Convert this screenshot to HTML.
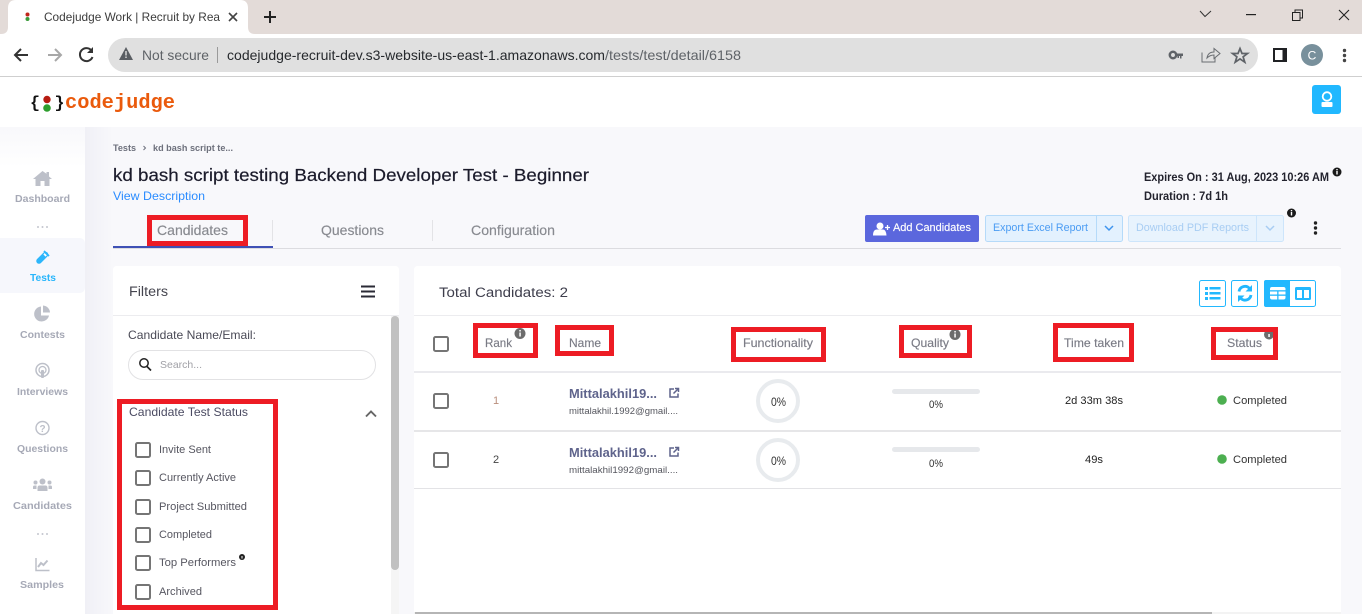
<!DOCTYPE html>
<html lang="en"><head><meta charset="utf-8"><title>Codejudge Work | Recruit by Real Skills</title>
<style>
html,body{margin:0;padding:0;width:1362px;height:614px;overflow:hidden;background:#fff}
svg{display:block}
text{font-family:"Liberation Sans",sans-serif;white-space:pre}
.b{font-weight:700}
</style></head><body>
<svg xmlns="http://www.w3.org/2000/svg" width="1362" height="614" viewBox="0 0 1362 614">
<defs>
<linearGradient id="sh" x1="0" x2="1" y1="0" y2="0"><stop offset="0" stop-color="#f0f0f6"/><stop offset="1" stop-color="#f8f8fb"/></linearGradient>
<linearGradient id="fade" x1="0" x2="0" y1="0" y2="1"><stop offset="0" stop-color="#f8f8fb"/><stop offset="1" stop-color="#fff"/></linearGradient>
</defs>
<!-- browser chrome -->
<rect width="1362" height="34" fill="#e3dbd8"/>
<path d="M0 34h1q7 0 7-7V8q0-8 8-8h224q8 0 8 8v19q0 7 7 7z" fill="#fff"/>
<rect y="34" width="1362" height="42" fill="#fff"/>
<rect y="76" width="1362" height="1" fill="#cfcfcf"/>
<circle cx="27.500" cy="14.500" r="2" fill="#c1261c"/><circle cx="27.500" cy="19" r="2" fill="#3a9a3a"/>
<text x="44" y="21" font-size="12" fill="#3c3c3c" textLength="176" lengthAdjust="spacingAndGlyphs">Codejudge Work | Recruit by Rea</text>
<path d="M229 13l8 8M237 13l-8 8" stroke="#444" stroke-width="1.600" fill="none"/>
<path d="M264 17h12M270 11v12" stroke="#222" stroke-width="2" fill="none"/>
<path d="M1200 11l5 5.500 6-5.500" stroke="#333" stroke-width="1" fill="none"/>
<rect x="1246" y="14" width="10" height="1.200" fill="#222"/>
<path d="M1292.500 12.500h7.500v8h-7.500zM1295 12.500v-2.500h7.500v8H1300" stroke="#222" stroke-width="1" fill="none"/>
<path d="M1339 10l10 10M1349 10l-10 10" stroke="#222" stroke-width="1.100" fill="none"/>
<path d="M28 55H16M21 49l-6 6 6 6" stroke="#333" stroke-width="2" fill="none"/>
<path d="M61 55H48M55 49l6 6-6 6" stroke="#a8a8a8" stroke-width="2" fill="none"/>
<path d="M91.500 50.500A6.500 6.500 0 1 0 92.500 57" stroke="#333" stroke-width="2" fill="none"/><path d="M93 47v6h-6z" fill="#333"/>
<rect x="108" y="38" width="1150" height="34" rx="17" fill="#e0e0e0"/>
<path d="M126 47l7 13h-14z" fill="#5a5e63"/><rect x="125.300" y="51" width="1.400" height="4.500" fill="#e0e0e0"/><rect x="125.300" y="56.500" width="1.400" height="1.500" fill="#e0e0e0"/>
<text x="142" y="60" font-size="14" fill="#5f6368" textLength="67" lengthAdjust="spacingAndGlyphs">Not secure</text>
<rect x="217" y="47" width="1" height="16" fill="#9a9a9a"/>
<text x="227" y="60" font-size="14" fill="#26292d" textLength="378" lengthAdjust="spacingAndGlyphs">codejudge-recruit-dev.s3-website-us-east-1.amazonaws.com</text>
<text x="605" y="60" font-size="14" fill="#5f6368" textLength="136" lengthAdjust="spacingAndGlyphs">/tests/test/detail/6158</text>
<circle cx="1173" cy="55" r="3.200" fill="none" stroke="#5f6368" stroke-width="2.500"/><path d="M1176 53.500h7v2.500h-1.500v2.500h-1.500V56h-1v2h-1.500V56H1176z" fill="#5f6368"/>
<path d="M1202 52.500v9.500h13v-4M1207 58q1-6 7-6v-3.500l6 5-6 5V55q-4 0-7 3z" stroke="#6a6e72" stroke-width="1" fill="none"/>
<path d="M1240 48.500l2 5h5.500l-4.400 3.300 1.700 5.400-4.800-3.300-4.800 3.300 1.700-5.400-4.400-3.300h5.500z" stroke="#5f6368" stroke-width="1.700" fill="none"/>
<rect x="1273" y="48" width="14" height="14" fill="#202124"/><rect x="1275" y="50" width="7.500" height="10" fill="#fff"/>
<circle cx="1312" cy="55" r="11" fill="#78909c"/><text x="1312" y="59.500" font-size="12" fill="#fff" text-anchor="middle">C</text>
<circle cx="1344.500" cy="50.500" r="1.700" fill="#444"/><circle cx="1344.500" cy="55.500" r="1.700" fill="#444"/><circle cx="1344.500" cy="60.500" r="1.700" fill="#444"/>

<!-- app header -->
<rect y="77" width="1362" height="50" fill="#fff"/>
<text x="30" y="107.500" font-size="17" class="b" fill="#111" style="font-family:'Liberation Mono',monospace" textLength="10" lengthAdjust="spacingAndGlyphs">{</text>
<text x="54.500" y="107.500" font-size="17" class="b" fill="#111" style="font-family:'Liberation Mono',monospace" textLength="10" lengthAdjust="spacingAndGlyphs">}</text>
<circle cx="47" cy="99.500" r="3.700" fill="#b71c12"/><circle cx="47" cy="108" r="3.800" fill="#2e9e2e"/>
<text x="65" y="108" font-size="20" class="b" fill="#ea5a0c" style="font-family:'Liberation Mono',monospace" textLength="110" lengthAdjust="spacingAndGlyphs">codejudge</text>
<rect x="1312" y="85" width="29" height="29" rx="3" fill="#21b8ff"/>
<circle cx="1327" cy="96.500" r="4.300" fill="none" stroke="#fff" stroke-width="1.800"/><rect x="1321.500" y="102" width="11" height="5" rx="1" fill="#fff"/>

<!-- page background -->
<rect y="127" width="1362" height="487" fill="#f8f8fb"/>
<rect x="85" y="127" width="28" height="487" fill="url(#sh)"/>
<rect y="127" width="85" height="487" fill="#fff"/>
<rect y="127" width="85" height="40" fill="url(#fade)"/>
<path d="M0 238h79q6 0 6 6v43q0 6-6 6H0z" fill="#f6f7fc"/>

<!-- sidebar -->
<path d="M42.500 171l-9.500 8h2.500v7h5v-5h4v5h5v-7H52l-3-2.500V172h-2.500v1.800z" fill="#bdc0c9"/>
<text x="15" y="202" font-size="10.500" class="b" fill="#a6a9b6" textLength="55" lengthAdjust="spacingAndGlyphs">Dashboard</text>
<g fill="#c4c6cf"><circle cx="38" cy="227" r="1"/><circle cx="42.500" cy="227" r="1"/><circle cx="47" cy="227" r="1"/><circle cx="38" cy="534" r="1"/><circle cx="42.500" cy="534" r="1"/><circle cx="47" cy="534" r="1"/></g>
<path d="M39 261l6.500-6.500" stroke="#2cb6fb" stroke-width="5.500" stroke-linecap="round" fill="none"/>
<path d="M44 251l5 5" stroke="#2cb6fb" stroke-width="1.800" fill="none"/>
<path d="M44 253.800l2.200 2.200" stroke="#fff" stroke-width="1.800" fill="none"/>
<text x="30" y="281" font-size="10.500" class="b" fill="#29b6fb" textLength="26" lengthAdjust="spacingAndGlyphs">Tests</text>
<path d="M41 306.500a7.500 7.500 0 1 0 8 9H41z" fill="#bdc0c9"/><path d="M43 305.500a7.500 7.500 0 0 1 7 7h-7z" fill="#bdc0c9"/>
<text x="20" y="338" font-size="10.500" class="b" fill="#a6a9b6" textLength="45" lengthAdjust="spacingAndGlyphs">Contests</text>
<circle cx="42.500" cy="370" r="6.500" fill="none" stroke="#bdc0c9" stroke-width="1.500"/><circle cx="42.500" cy="370" r="3.500" fill="none" stroke="#bdc0c9" stroke-width="1.300"/><rect x="41" y="370" width="3" height="8" rx="1" fill="#bdc0c9"/>
<text x="17" y="395" font-size="10.500" class="b" fill="#a6a9b6" textLength="51" lengthAdjust="spacingAndGlyphs">Interviews</text>
<circle cx="42.500" cy="428" r="6.500" fill="none" stroke="#bdc0c9" stroke-width="1.400"/><text x="42.500" y="432" font-size="10" class="b" fill="#bdc0c9" text-anchor="middle">?</text>
<text x="17" y="452" font-size="10.500" class="b" fill="#a6a9b6" textLength="51" lengthAdjust="spacingAndGlyphs">Questions</text>
<g fill="#bdc0c9"><circle cx="42.500" cy="481.500" r="3"/><circle cx="35.500" cy="482.500" r="2"/><circle cx="49.500" cy="482.500" r="2"/><path d="M37.500 491v-3q0-2.500 2-2.500h6q2 0 2 2.500v3z"/><path d="M33 489v-2q0-1.500 1.500-1.500h2v3.500zM52 489v-2q0-1.500-1.500-1.500h-2v3.500z"/></g>
<text x="13" y="509" font-size="10.500" class="b" fill="#a6a9b6" textLength="59" lengthAdjust="spacingAndGlyphs">Candidates</text>
<path d="M36 558v12.500h13.500" stroke="#bdc0c9" stroke-width="1.500" fill="none"/><path d="M38 567l3-4 2.500 2 4-4.500" stroke="#bdc0c9" stroke-width="2" fill="none"/>
<text x="20" y="588" font-size="10.500" class="b" fill="#a6a9b6" textLength="44" lengthAdjust="spacingAndGlyphs">Samples</text>

<!-- page header -->
<text x="113" y="151" font-size="9" class="b" fill="#6d707c" textLength="23" lengthAdjust="spacingAndGlyphs">Tests</text>
<path d="M143.500 146l2 2-2 2" stroke="#6d707c" stroke-width="1" fill="none"/>
<text x="153" y="151" font-size="9" class="b" fill="#6d707c" textLength="80" lengthAdjust="spacingAndGlyphs">kd bash script te...</text>
<text x="113" y="181" font-size="17.500" fill="#1b1b2b" stroke="#1b1b2b" stroke-width=".2" textLength="476" lengthAdjust="spacingAndGlyphs">kd bash script testing Backend Developer Test - Beginner</text>
<text x="113" y="200" font-size="12" fill="#2b8cff" textLength="92" lengthAdjust="spacingAndGlyphs">View Description</text>
<text x="1144" y="181" font-size="11.500" class="b" fill="#23232e" textLength="185" lengthAdjust="spacingAndGlyphs">Expires On : 31 Aug, 2023 10:26 AM</text>
<text x="1144" y="200" font-size="11.500" class="b" fill="#23232e" textLength="84" lengthAdjust="spacingAndGlyphs">Duration : 7d 1h</text>
<g><circle cx="1337" cy="172" r="4.500" fill="#1a1a1a"/><rect x="1336.300" y="171" width="1.400" height="3.500" fill="#fff"/><rect x="1336.300" y="169" width="1.400" height="1.300" fill="#fff"/></g>

<!-- tabs -->
<text x="157" y="235" font-size="14" fill="#888a90" stroke="#888a90" stroke-width=".15" textLength="71" lengthAdjust="spacingAndGlyphs">Candidates</text>
<text x="321" y="235" font-size="14" fill="#888a90" stroke="#888a90" stroke-width=".15" textLength="63" lengthAdjust="spacingAndGlyphs">Questions</text>
<text x="471" y="235" font-size="14" fill="#888a90" stroke="#888a90" stroke-width=".15" textLength="84" lengthAdjust="spacingAndGlyphs">Configuration</text>
<rect x="272" y="220" width="1" height="21" fill="#e3e3e6"/><rect x="432" y="220" width="1" height="21" fill="#e3e3e6"/>
<rect x="113" y="248" width="1228" height="1" fill="#dcdce0"/>
<rect x="113" y="246" width="160" height="2" fill="#3f51b5"/>

<!-- action buttons -->
<rect x="865" y="215" width="114" height="27" rx="2" fill="#5b67dd"/>
<circle cx="880" cy="226" r="3.500" fill="#fff"/><path d="M873 235.500q0-6 4-6h6q3 0 3.500 6z" fill="#fff"/><path d="M885 227.500h5M887.500 225v5" stroke="#fff" stroke-width="1.300"/>
<text x="893" y="231" font-size="11" fill="#fff" stroke="#fff" stroke-width=".15" textLength="78" lengthAdjust="spacingAndGlyphs">Add Candidates</text>
<rect x="985.500" y="215.500" width="137" height="26" rx="2" fill="#e3f1fe" stroke="#b5daf9"/><rect x="1096" y="215" width="1" height="27" fill="#b5daf9"/>
<text x="993" y="231" font-size="11" fill="#4b9cf3" textLength="95" lengthAdjust="spacingAndGlyphs">Export Excel Report</text>
<path d="M1105 226l4 4 4-4" stroke="#3f94ee" stroke-width="1.500" fill="none"/>
<rect x="1128.500" y="215.500" width="155" height="26" rx="2" fill="#e8f3fd" stroke="#cde5fb"/><rect x="1256" y="215" width="1" height="27" fill="#cde5fb"/>
<text x="1136" y="231" font-size="11" fill="#a8cdf3" textLength="113" lengthAdjust="spacingAndGlyphs">Download PDF Reports</text>
<path d="M1266 226l4 4 4-4" stroke="#a8cdf3" stroke-width="1.500" fill="none"/>
<circle cx="1291.500" cy="213" r="4.500" fill="#1a1a1a"/><rect x="1290.800" y="212" width="1.400" height="3.500" fill="#fff"/><rect x="1290.800" y="210" width="1.400" height="1.300" fill="#fff"/>
<circle cx="1315.500" cy="223" r="1.700" fill="#222"/><circle cx="1315.500" cy="228" r="1.700" fill="#222"/><circle cx="1315.500" cy="233" r="1.700" fill="#222"/>

<!-- filters card -->
<path d="M113 614V270q0-4 4-4h278q4 0 4 4v344z" fill="#fff"/>
<text x="129" y="296" font-size="13.500" fill="#45454f" textLength="39" lengthAdjust="spacingAndGlyphs">Filters</text>
<rect x="361" y="285.500" width="14" height="2" fill="#2a2a35"/><rect x="361" y="290.500" width="14" height="2" fill="#2a2a35"/><rect x="361" y="295.500" width="14" height="2" fill="#2a2a35"/>
<rect x="113" y="315" width="286" height="1" fill="#ececef"/>
<rect x="391" y="316" width="8" height="298" fill="#f5f5f5"/><rect x="391" y="316" width="8" height="254" rx="4" fill="#c1c1c1"/>
<text x="128" y="339" font-size="12" fill="#4a4a56" textLength="128" lengthAdjust="spacingAndGlyphs">Candidate Name/Email:</text>
<rect x="128.500" y="350.500" width="247" height="29" rx="14.500" fill="#fff" stroke="#e2e2e4"/>
<circle cx="144" cy="363" r="4.200" fill="none" stroke="#222" stroke-width="1.500"/><path d="M147 366.500l4 4" stroke="#222" stroke-width="1.700"/>
<text x="160" y="368" font-size="10.500" fill="#a0a0a6" textLength="42" lengthAdjust="spacingAndGlyphs">Search...</text>
<text x="129" y="416" font-size="12" fill="#4b4b62" textLength="119" lengthAdjust="spacingAndGlyphs">Candidate Test Status</text>
<path d="M366 416.500l5-5 5 5" stroke="#666" stroke-width="1.900" fill="none"/>
<g fill="#fff" stroke="#757575" stroke-width="2">
<rect x="136" y="443" width="14" height="14" rx="1.500"/><rect x="136" y="471" width="14" height="14" rx="1.500"/><rect x="136" y="500" width="14" height="14" rx="1.500"/><rect x="136" y="528" width="14" height="14" rx="1.500"/><rect x="136" y="556" width="14" height="14" rx="1.500"/><rect x="136" y="585" width="14" height="14" rx="1.500"/>
</g>
<g font-size="11" fill="#565660">
<text x="159" y="453" textLength="52" lengthAdjust="spacingAndGlyphs">Invite Sent</text>
<text x="159" y="481" textLength="77" lengthAdjust="spacingAndGlyphs">Currently Active</text>
<text x="159" y="510" textLength="88" lengthAdjust="spacingAndGlyphs">Project Submitted</text>
<text x="159" y="538" textLength="53" lengthAdjust="spacingAndGlyphs">Completed</text>
<text x="159" y="566" textLength="77" lengthAdjust="spacingAndGlyphs">Top Performers</text>
<text x="159" y="595" textLength="43" lengthAdjust="spacingAndGlyphs">Archived</text>
</g>
<circle cx="242" cy="557" r="3" fill="#222"/><rect x="241.500" y="556" width="1" height="2.500" fill="#fff"/>

<!-- table card -->
<path d="M414 614V270q0-4 4-4h919q4 0 4 4v344z" fill="#fff"/>
<text x="439" y="297" font-size="13.500" fill="#3e3e4c" textLength="129" lengthAdjust="spacingAndGlyphs">Total Candidates: 2</text>
<rect x="1199.500" y="280.500" width="26" height="26" rx="2" fill="#fff" stroke="#22b8fe"/>
<g fill="#22b8fe"><rect x="1205" y="287" width="3" height="3"/><rect x="1205" y="292" width="3" height="3"/><rect x="1205" y="297" width="3" height="3"/><rect x="1209.500" y="287" width="11" height="2.500"/><rect x="1209.500" y="292" width="11" height="2.500"/><rect x="1209.500" y="297" width="11" height="2.500"/></g>
<rect x="1231.500" y="280.500" width="26" height="26" rx="2" fill="#fff" stroke="#22b8fe"/>
<path d="M1239 291.500a6 6 0 0 1 10.500-3M1251 295a6 6 0 0 1-10.500 3" stroke="#22b8fe" stroke-width="2.800" fill="none"/><path d="M1252 285v6.500h-6.500zM1238 302v-6.500h6.500z" fill="#22b8fe"/>
<rect x="1264.500" y="280.500" width="51" height="26" rx="2" fill="#fff" stroke="#22b8fe"/>
<path d="M1266 280h24v27h-24q-2 0-2-2v-23q0-2 2-2z" fill="#22b8fe"/>
<rect x="1270" y="287" width="15.500" height="12.500" rx="2" fill="#fff"/><rect x="1270" y="290.200" width="15.500" height="1.300" fill="#22b8fe"/><rect x="1270" y="294.500" width="15.500" height="1.300" fill="#22b8fe"/><rect x="1277.200" y="290.500" width="1.300" height="9" fill="#22b8fe"/>
<rect x="1295" y="287" width="16" height="13" rx="1.500" fill="#22b8fe"/><rect x="1297" y="290" width="5" height="8" fill="#fff"/><rect x="1304" y="290" width="5" height="8" fill="#fff"/>

<rect x="414" y="315" width="927" height="1" fill="#ececef"/>
<rect x="414" y="371" width="927" height="2" fill="#eaeaee"/>
<rect x="414" y="430" width="927" height="2" fill="#e6e6e8"/>
<rect x="414" y="488" width="927" height="1" fill="#e3e3e6"/>

<g fill="#fff" stroke="#757575" stroke-width="2">
<rect x="434" y="337" width="14" height="14" rx="1.500"/><rect x="434" y="394" width="14" height="14" rx="1.500"/><rect x="434" y="453" width="14" height="14" rx="1.500"/>
</g>
<g font-size="12" fill="#7a7b85" stroke="#7a7b85" stroke-width=".15">
<text x="485" y="347" textLength="27" lengthAdjust="spacingAndGlyphs">Rank</text>
<text x="569" y="347" textLength="32" lengthAdjust="spacingAndGlyphs">Name</text>
<text x="743" y="347" textLength="70" lengthAdjust="spacingAndGlyphs">Functionality</text>
<text x="911" y="347" textLength="38" lengthAdjust="spacingAndGlyphs">Quality</text>
<text x="1064" y="347" textLength="60" lengthAdjust="spacingAndGlyphs">Time taken</text>
<text x="1227" y="347" textLength="35" lengthAdjust="spacingAndGlyphs">Status</text>
</g>
<g fill="#6c6c6c"><circle cx="520" cy="333.500" r="5.500"/><circle cx="955" cy="334.500" r="5.500"/><circle cx="1269" cy="334.500" r="5"/></g>
<g fill="#fff"><rect x="519.300" y="332.500" width="1.500" height="4"/><rect x="519.300" y="330" width="1.500" height="1.500"/><rect x="954.300" y="333.500" width="1.500" height="4"/><rect x="954.300" y="331" width="1.500" height="1.500"/><rect x="1268.300" y="334" width="1.500" height="3"/></g>

<!-- rows -->
<text x="496" y="404" font-size="11" fill="#b98e7c" text-anchor="middle">1</text>
<text x="496" y="463" font-size="11" fill="#444" text-anchor="middle">2</text>
<text x="569" y="398" font-size="13" class="b" fill="#5f648c" textLength="88" lengthAdjust="spacingAndGlyphs">Mittalakhil19...</text>
<text x="569" y="457" font-size="13" class="b" fill="#5f648c" textLength="88" lengthAdjust="spacingAndGlyphs">Mittalakhil19...</text>
<text x="569" y="414" font-size="9.500" fill="#55565e" textLength="109" lengthAdjust="spacingAndGlyphs">mittalakhil.1992@gmail....</text>
<text x="569" y="473" font-size="9.500" fill="#55565e" textLength="109" lengthAdjust="spacingAndGlyphs">mittalakhil1992@gmail....</text>
<g fill="none" stroke="#5f648c" stroke-width="1.500"><path d="M674 389h-4v8h8v-3.500"/><path d="M673.500 393.500l5-5M675 388.500h3.500v3.500"/><path d="M674 448h-4v8h8v-3.500"/><path d="M673.500 452.500l5-5M675 447.500h3.500v3.500"/></g>
<circle cx="778" cy="401" r="20" fill="none" stroke="#e8ebee" stroke-width="4"/>
<circle cx="778" cy="460" r="20" fill="none" stroke="#e8ebee" stroke-width="4"/>
<text x="771" y="406" font-size="12" fill="#333" textLength="15" lengthAdjust="spacingAndGlyphs">0%</text>
<text x="771" y="465" font-size="12" fill="#333" textLength="15" lengthAdjust="spacingAndGlyphs">0%</text>
<rect x="892" y="389" width="88" height="5" rx="2.500" fill="#e6e8eb"/>
<rect x="892" y="447" width="88" height="5" rx="2.500" fill="#e6e8eb"/>
<text x="929" y="408" font-size="11" fill="#333" textLength="14" lengthAdjust="spacingAndGlyphs">0%</text>
<text x="929" y="467" font-size="11" fill="#333" textLength="14" lengthAdjust="spacingAndGlyphs">0%</text>
<text x="1065" y="404" font-size="11" fill="#222" textLength="58" lengthAdjust="spacingAndGlyphs">2d 33m 38s</text>
<text x="1085" y="463" font-size="11" fill="#222" textLength="18" lengthAdjust="spacingAndGlyphs">49s</text>
<circle cx="1222" cy="400" r="4.800" fill="#4caf50"/><circle cx="1222" cy="459" r="4.800" fill="#4caf50"/>
<text x="1233" y="404" font-size="11" fill="#333" textLength="54" lengthAdjust="spacingAndGlyphs">Completed</text>
<text x="1233" y="463" font-size="11" fill="#333" textLength="54" lengthAdjust="spacingAndGlyphs">Completed</text>

<rect x="414" y="612" width="927" height="2" fill="#f3f3f3"/><rect x="415" y="612" width="797" height="2" fill="#b5b5b5"/>

<!-- red annotation boxes -->
<g fill="none" stroke="#ed1c24" stroke-width="5">
<rect x="149.500" y="217.500" width="96" height="26"/>
<rect x="119.500" y="401.500" width="156" height="206"/>
<rect x="475.500" y="325.500" width="60" height="30"/>
<rect x="557.500" y="327.500" width="54" height="26"/>
<rect x="733.500" y="329.500" width="90" height="30"/>
<rect x="901.500" y="327.500" width="68" height="28"/>
<rect x="1055.500" y="325.500" width="76" height="34"/>
<rect x="1213.500" y="329.500" width="62" height="28"/>
</g>
</svg>
</body></html>
